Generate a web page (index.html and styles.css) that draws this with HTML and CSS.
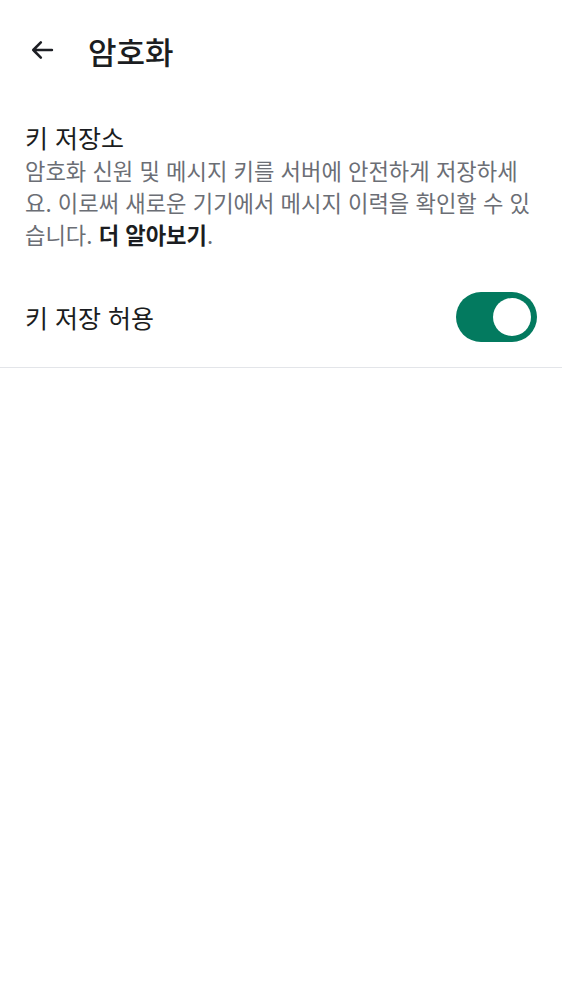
FILE: index.html
```html
<!DOCTYPE html>
<html lang="ko">
<head>
<meta charset="utf-8">
<link rel="stylesheet" href="styles.css">
</head>
<body>
<header class="topbar">
  <button class="back" aria-label="뒤로">
    <svg width="28" height="28" viewBox="0 0 24 24"><path d="M20.5 12H4.5M11 5.5L4.5 12l6.5 6.5" fill="none" stroke="#1d1f24" stroke-width="2.2" stroke-linecap="round" stroke-linejoin="round"/></svg>
  </button>
  <h1 class="title">암호화</h1>
</header>
<section class="section">
  <h2 class="section-title">키 저장소</h2>
  <p class="desc">암호화 신원 및 메시지 키를 서버에 안전하게 저장하세요. 이로써 새로운 기기에서 메시지 이력을 확인할 수 있습니다. <b class="link">더 알아보기</b>.</p>
</section>
<div class="row">
  <span class="row-label">키 저장 허용</span>
  <span class="toggle"><span class="knob"></span></span>
</div>
</body>
</html>
```
FILE: styles.css
```css
* { box-sizing: border-box; }
html, body { margin: 0; padding: 0; background: #fff; }
body {
  font-family: "Noto Sans CJK KR", "Noto Sans", sans-serif;
  color: #1b1d21;
  width: 562px;
}
.topbar {
  display: flex;
  align-items: center;
  height: 100px;
  padding-left: 28px;
}
.back {
  border: 0;
  background: none;
  padding: 0;
  width: 28px;
  height: 28px;
  display: flex;
  align-items: center;
  justify-content: center;
}
.title {
  margin: 0 0 0 32px;
  font-size: 31px;
  font-weight: 500;
  line-height: 1;
}
.section {
  padding: 20px 25px 0;
}
.section-title {
  margin: 0;
  font-size: 25px;
  font-weight: 400;
  line-height: 34px;
}
.desc {
  margin: 0;
  font-size: 22.2px;
  line-height: 32px;
  color: #6b6e75;
  word-break: break-all;
}
.link {
  color: #1b1d21;
  font-weight: 700;
}
.row {
  display: flex;
  align-items: center;
  justify-content: space-between;
  padding: 42px 25px 25px;
  border-bottom: 1px solid #e3e5e9;
}
.row-label {
  font-size: 25px;
  line-height: 32px;
}
.toggle {
  width: 81px;
  height: 50px;
  border-radius: 25px;
  background: #037a5f;
  display: flex;
  align-items: center;
  justify-content: flex-end;
  padding-right: 6px;
}
.knob {
  width: 38px;
  height: 38px;
  border-radius: 50%;
  background: #fff;
}
```
